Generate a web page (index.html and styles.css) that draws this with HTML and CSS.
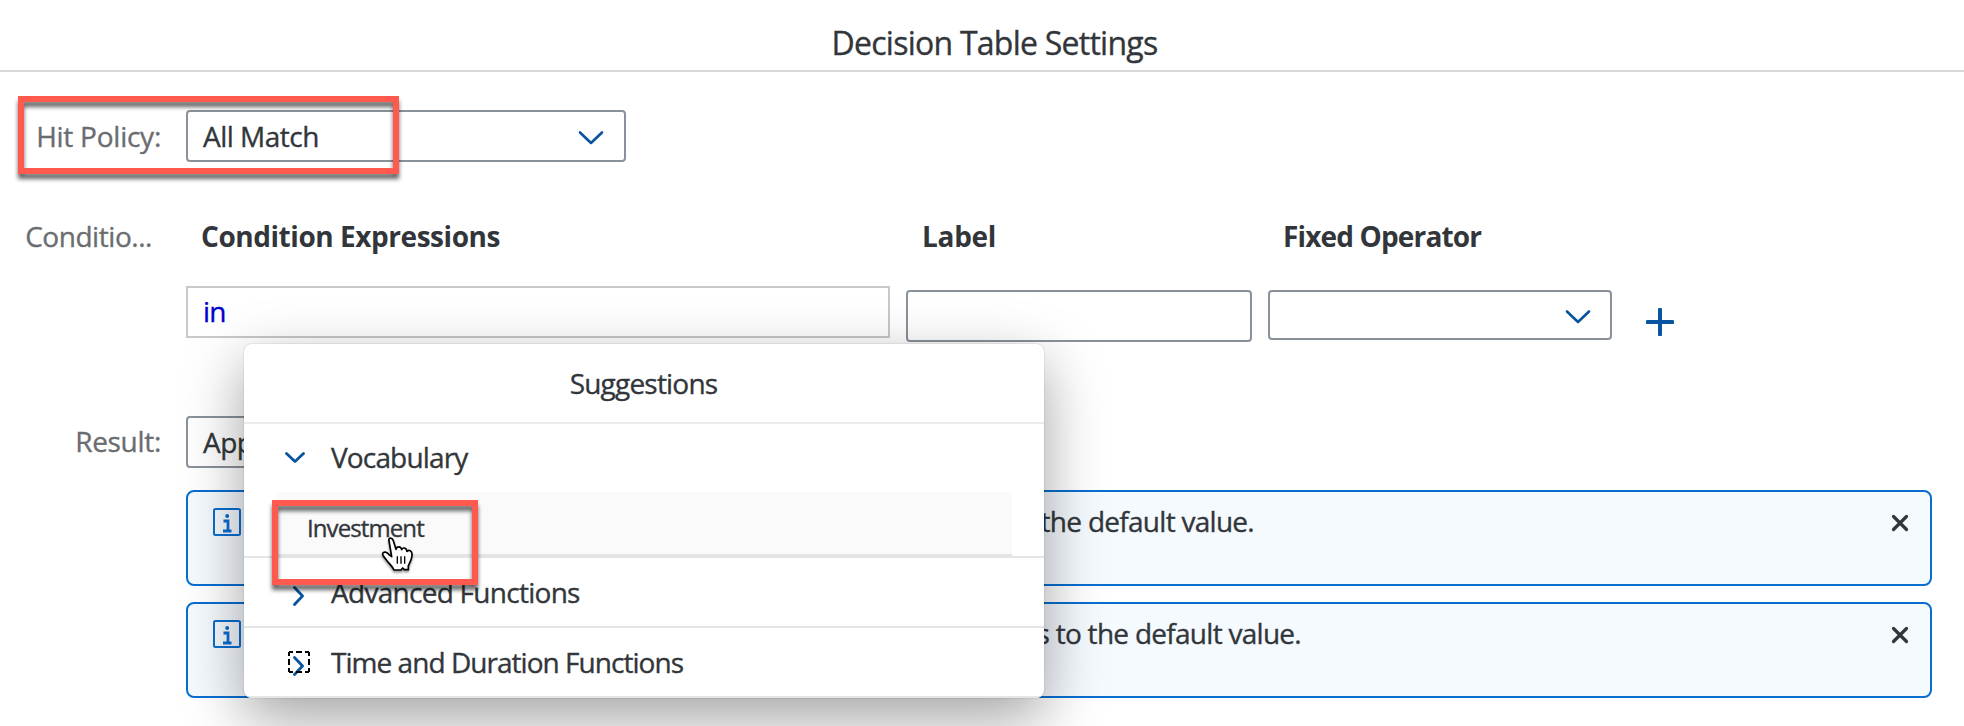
FILE: index.html
```html
<!DOCTYPE html>
<html lang="en">
<head>
<meta charset="utf-8">
<title>Decision Table Settings</title>
<link rel="stylesheet" href="styles.css">
</head>
<body>
<header class="page-header"><h1>Decision Table Settings</h1></header>
<main class="form">
  <div class="row row-hit">
    <label class="label t-hit">Hit Policy:</label>
    <div class="select">
      <span class="t-match">All Match</span>
      <svg class="chevron" width="26" height="16" viewBox="0 0 26 16"><path d="M2 2.5 L13 13 L24 2.5"/></svg>
    </div>
  </div>
  <div class="row row-head">
    <label class="label t-cond">Conditio...</label>
    <div class="columns heads">
      <strong class="t-ce">Condition Expressions</strong>
      <strong class="t-label">Label</strong>
      <strong class="t-fixed">Fixed Operator</strong>
    </div>
  </div>
  <div class="row row-inputs">
    <span class="label"></span>
    <div class="columns">
      <div class="expression">in</div>
      <div class="input"></div>
      <div class="select operator">
        <svg class="chevron" width="26" height="16" viewBox="0 0 26 16"><path d="M2 2.5 L13 13 L24 2.5"/></svg>
      </div>
      <svg class="plus" width="28" height="28" viewBox="0 0 28 28"><path d="M14 1.5V26.5M1.5 14H26.5"/></svg>
    </div>
  </div>
  <div class="row row-result">
    <label class="label">Result:</label>
    <div class="select"><span class="t-match">App</span></div>
  </div>
  <div class="messages">
    <div class="message">
      <svg class="info" width="28" height="28" viewBox="0 0 28 28"><rect x="1" y="1" width="26" height="26" rx="1.5"/><circle cx="14.2" cy="8" r="2"/><path d="M10.5 13H15V23M10 23H18.5"/></svg>
      <p class="end-first">the default value.</p>
      <svg class="close" width="18" height="18" viewBox="0 0 18 18"><path d="M2.5 2.5L15.5 15.5M15.5 2.5L2.5 15.5"/></svg>
    </div>
    <div class="message">
      <svg class="info" width="28" height="28" viewBox="0 0 28 28"><rect x="1" y="1" width="26" height="26" rx="1.5"/><circle cx="14.2" cy="8" r="2"/><path d="M10.5 13H15V23M10 23H18.5"/></svg>
      <p class="end-second">s to the default value.</p>
      <svg class="close" width="18" height="18" viewBox="0 0 18 18"><path d="M2.5 2.5L15.5 15.5M15.5 2.5L2.5 15.5"/></svg>
    </div>
  </div>
</main>

<section class="popover">
  <h2>Suggestions</h2>
  <div class="group open">
    <div class="group-title">
      <span class="toggle down"><svg width="20" height="12" viewBox="0 0 20 12"><path d="M1.5 1.5L10 9.5L18.5 1.5"/></svg></span>
      <span class="t-voc">Vocabulary</span>
    </div>
    <div class="suggestion">Investment</div>
  </div>
  <div class="group">
    <div class="group-title">
      <span class="toggle"><svg width="12" height="20" viewBox="0 0 12 20"><path d="M1.5 1.5L9.5 10L1.5 18.5"/></svg></span>
      <span class="t-adv">Advanced Functions</span>
    </div>
  </div>
  <div class="group">
    <div class="group-title">
      <span class="toggle"><svg width="12" height="20" viewBox="0 0 12 20"><path d="M1.5 1.5L9.5 10L1.5 18.5"/></svg>
        <svg class="focus" width="22" height="22" viewBox="0 0 22 22"><rect x="1" y="1" width="20" height="20"/></svg></span>
      <span class="t-time">Time and Duration Functions</span>
    </div>
  </div>
</section>

<div class="marker marker-policy"></div>
<div class="marker marker-suggestion"></div>
<svg class="pointer" width="34" height="38" viewBox="360 138 102 114">
  <path class="hand" d="M387 152C385 142 396 142 400 152L408 178C410 168 423 168 425 179C430 171 439 173 441 184C447 178 456 182 456 193C457 207 449 218 445 227L445 239L433 239L428 234L423 240L402 240C397 229 389 222 381 212C374 203 366 195 368 190C371 184 381 185 387 194L395 200Z"/>
  <path class="creases" d="M412 199V221M423 199V221M434 199V221"/>
</svg>
</body>
</html>
```
FILE: styles.css
```css
* { box-sizing: border-box; margin: 0; }
body {
  position: relative;
  width: 1964px;
  height: 726px;
  overflow: hidden;
  background: #fff;
  color: #32363a;
  font: 400 28px/48px "Open Sans", "Noto Sans", sans-serif;
  white-space: nowrap;
  -webkit-text-stroke: .35px currentColor;
}
svg { display: block; flex: none; fill: none; }
strong { -webkit-text-stroke-width: 0; }

.page-header {
  height: 72px;
  padding: 14px 0 0 25px;
  border-bottom: 2px solid #d9d9d9;
  text-align: center;
}
h1 { font-size: 32px; font-weight: 400; line-height: 57px; letter-spacing: -.75px; }

.row { display: grid; grid-template-columns: 161px 1fr; column-gap: 25px; }
.row-hit { margin-top: 38px; }
.row-head { margin-top: 48px; line-height: 52px; }
.row-inputs { margin-top: 24px; height: 56px; }
.row-result { margin-top: 74px; }
.label { color: #6a6d70; text-align: right; line-height: 51px; letter-spacing: -.3px; }
.row-head .label { line-height: 52px; padding-right: 9px; }
.row-hit .t-hit { line-height: 52px; letter-spacing: -.25px; }
.row-head .t-cond { letter-spacing: -.45px; }
.t-match { letter-spacing: -.5px; }

.columns { display: grid; grid-template-columns: 704px 346px 344px 28px; column-gap: 16px; align-items: start; }
.heads { padding-left: 15px; }
.t-ce { letter-spacing: -.45px; }
.t-label { padding-left: 1px; letter-spacing: -.3px; }
.t-fixed { letter-spacing: -.85px; }

.select {
  display: flex;
  align-items: center;
  justify-content: space-between;
  width: 440px;
  height: 52px;
  padding: 0 20px 0 15px;
  border: 2px solid #89919a;
  border-radius: 4px;
  line-height: 46px;
}
.select span { margin-top: -1px; }
.chevron { margin-top: 3px; stroke: #0854a0; stroke-width: 2.6; stroke-linecap: round; stroke-linejoin: round; }
.expression { height: 52px; padding-left: 15px; border: 2px solid #c8c8c8; color: #0000d0; line-height: 47px; letter-spacing: -.8px; }
.input { height: 52px; margin-top: 4px; border: 2px solid #89919a; border-radius: 4px; }
.operator { width: auto; height: 50px; margin-top: 4px; padding-right: 19px; justify-content: flex-end; }
.plus { margin: 22px 0 0 18px; stroke: #0854a0; stroke-width: 4; stroke-linecap: round; }

.messages { display: grid; row-gap: 16px; margin: 22px 32px 0 186px; }
.message {
  display: flex;
  height: 96px;
  padding: 8px 21px 0 25px;
  border: 2px solid #0a6ed1;
  border-radius: 8px;
  background: #f5faff;
  line-height: 42px;
}
.message p { text-align: right; letter-spacing: -.72px; }
.end-first { width: 1013px; }
.end-second { width: 1060px; }
.info { margin-top: 8px; stroke: #0a6ed1; stroke-width: 2; }
.info circle { fill: #0a6ed1; stroke: none; }
.info path { stroke-width: 2.8; }
.close { margin: 14px 0 0 auto; stroke: #32363a; stroke-width: 3.2; stroke-linecap: round; }

.popover {
  position: absolute;
  left: 244px;
  top: 344px;
  width: 800px;
  height: 354px;
  border-radius: 8px;
  overflow: hidden;
  background: #fff;
  box-shadow: 0 0 2px rgba(0, 0, 0, .2), 0 20px 60px rgba(0, 0, 0, .37);
}
h2 {
  height: 80px;
  padding-right: 1px;
  border-bottom: 2px solid #ebebeb;
  font-size: 28px;
  font-weight: 400;
  line-height: 79px;
  letter-spacing: -.8px;
  text-align: center;
}
.group { height: 70px; border-bottom: 2px solid #e5e5e5; }
.group.open { height: 134px; }
.group-title { display: grid; grid-template-columns: 43px 1fr; height: 68px; padding-left: 44px; line-height: 68px; }
.open .group-title { line-height: 67px; }
.toggle { position: relative; padding: 28px 0 0 5px; }
.toggle svg { stroke: #0854a0; stroke-width: 2.8; stroke-linecap: round; stroke-linejoin: round; }
.down svg { margin-left: -8px; }
.toggle .focus { position: absolute; left: 0; top: 23px; stroke: #000; stroke-width: 2; stroke-dasharray: 4 3 6 3 4 0; stroke-linecap: butt; stroke-linejoin: miter; }
.t-voc { letter-spacing: -.85px; }
.t-adv { letter-spacing: -.72px; }
.t-time { letter-spacing: -.96px; }
.suggestion {
  height: 64px;
  margin: 0 32px;
  padding: 8px 0 0 31px;
  border-bottom: 2px solid #e5e5e5;
  background: #fafafa;
  font-size: 24px;
  line-height: 55px;
  letter-spacing: -.9px;
}

.marker { position: absolute; border: 6px solid #ff5a4d; filter: drop-shadow(0 5px 2px rgba(0, 0, 0, .6)); }
.marker-policy { left: 18px; top: 96px; width: 381px; height: 78px; }
.marker-suggestion { left: 272px; top: 500px; width: 206px; height: 85px; }
.pointer { position: absolute; left: 380px; top: 536px; filter: drop-shadow(0 2px 1px rgba(0, 0, 0, .4)); }
.hand { fill: #fff; stroke: #000; stroke-width: 5; stroke-linejoin: round; }
.creases { stroke: #000; stroke-width: 4; }
```
